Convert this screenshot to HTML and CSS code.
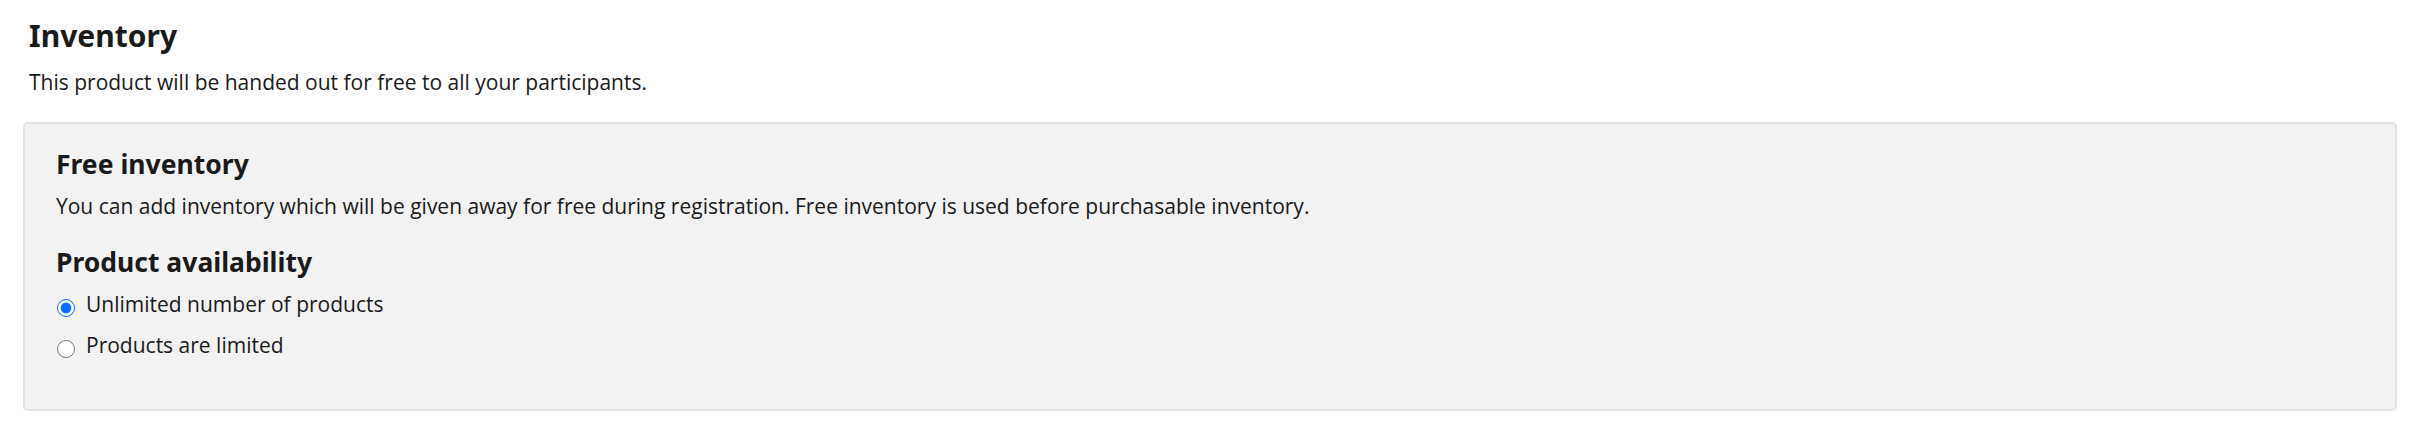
FILE: index.html
```html
<!DOCTYPE html>
<html lang="en">
<head>
    <meta charset="UTF-8">
    <meta name="viewport" content="width=device-width, initial-scale=1.0">
    <title>Inventory</title>
    <link rel="stylesheet" href="styles.css">
</head>
<body>

    <div class="pagina">
        <div class="cabecera">
            <h1>Inventory</h1>
            <p>This product will be handed out for free to all your participants.</p>
        </div>

        <div class="caja">
            <h2>Free inventory</h2>
            <p>You can add inventory which will be given away for free during registration. Free inventory is used before purchasable inventory.</p>

            <h3>Product availability</h3>
            <label class="opcion">
                <input type="radio" name="disponibilidad" checked>
                <span>Unlimited number of products</span>
            </label>
            <label class="opcion">
                <input type="radio" name="disponibilidad">
                <span>Products are limited</span>
            </label>
        </div>
    </div>

</body>
</html>
```

FILE: styles.css
```css
body {
    margin: 0;
    font-family: "Open Sans", Arial, sans-serif;
    background-color: #ffffff;
    color: #1a1a1a;
}

.pagina {
    padding: 16px 37px 0 23px;
}

.cabecera {
    padding-left: 6px;
}

h1, h2, h3 {
    font-family: "Noto Sans", Arial, sans-serif;
    font-weight: 700;
    margin: 0;
    color: #1a1a1a;
}

h1 {
    font-size: 30px;
    line-height: 40px;
}

.cabecera p {
    font-size: 21px;
    line-height: 28px;
    margin: 12px 0 26px 0;
}

.caja {
    background-color: #f2f2f2;
    border: 2px solid #e1e3e6;
    border-radius: 5px;
    padding: 22px 31px 50px 31px;
}

h2 {
    font-size: 26.5px;
    line-height: 36px;
}

.caja p {
    font-size: 21px;
    line-height: 28px;
    margin: 10px 0 24px 0;
}

h3 {
    font-size: 26.5px;
    line-height: 36px;
    margin-bottom: 10px;
}

.opcion {
    display: flex;
    align-items: flex-start;
    gap: 11px;
    font-size: 21px;
    line-height: 28px;
    margin-bottom: 13px;
}

.opcion:last-child {
    margin-bottom: 0;
}

.opcion input {
    width: 18px;
    height: 18px;
    margin: 9px 0 0 1px;
    accent-color: #0a6cff;
}
```
